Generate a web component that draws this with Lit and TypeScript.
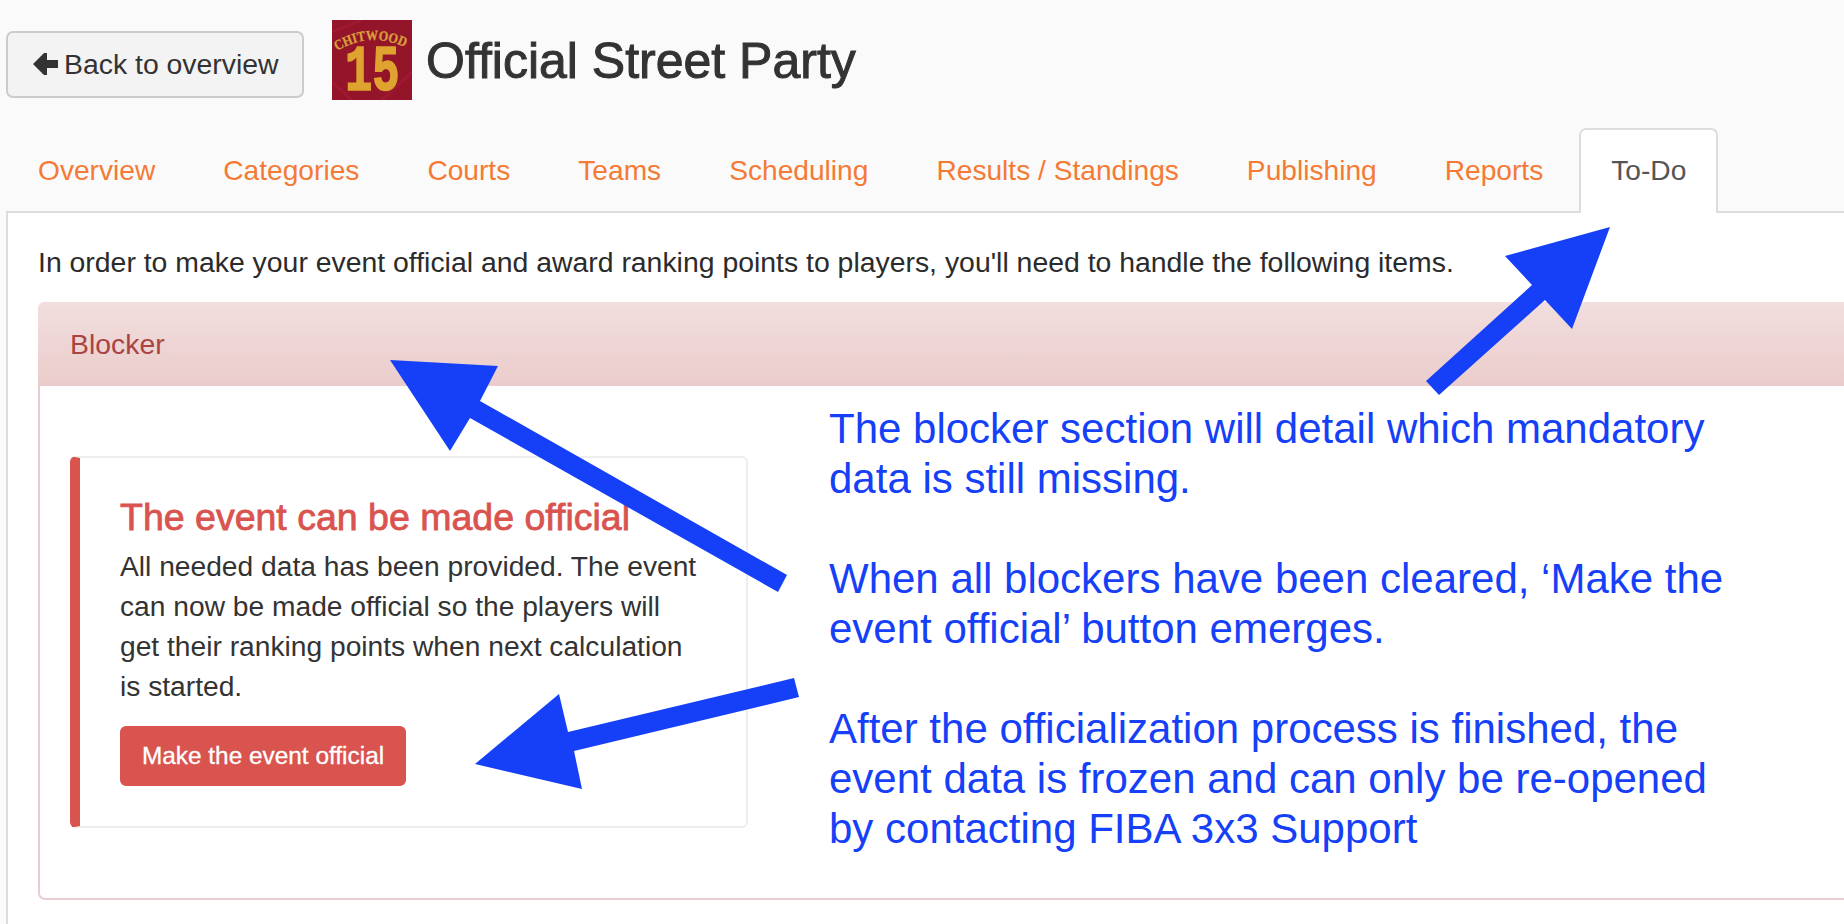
import { LitElement, css, html, svg } from "lit";
import { customElement } from "lit/decorators.js";

const TABS = [
  "Overview",
  "Categories",
  "Courts",
  "Teams",
  "Scheduling",
  "Results / Standings",
  "Publishing",
  "Reports",
  "To-Do",
];

const ARROWS = [
  "1610,227 1505,256 1532,285 1426,381 1439,395 1545,300 1572,329",
  "390,360 498,366 480,401 787,575 778,592 470,418 450,451",
  "475,764 559,694 568,732 794,678 799,697 574,751 582,789",
];

@customElement("app-root")
export class AppRoot extends LitElement {
  static styles = css`
    :host {
      display: block;
      position: relative;
      width: 1844px;
      height: 924px;
      overflow: hidden;
      background: #fafafa;
      color: #333;
      font-family: "Liberation Sans", Arial, sans-serif;
      font-size: 28.4px;
      line-height: 40px;
    }
    .header {
      display: flex;
      align-items: flex-start;
      height: 128px;
      padding: 20px 0 0 6px;
      box-sizing: border-box;
    }
    .back {
      display: flex;
      align-items: center;
      gap: 6px;
      box-sizing: border-box;
      width: 298px;
      height: 67px;
      margin: 11px 28px 0 0;
      padding: 0 0 1px 25px;
      background: #f3f3f3;
      border: 2px solid #ccc;
      border-radius: 7px;
    }
    .logo {
      display: block;
      width: 80px;
      height: 80px;
      margin-right: 14px;
    }
    h1 {
      margin: 13px 0 0;
      font-size: 50px;
      line-height: 56px;
      font-weight: 400;
      color: #333;
      -webkit-text-stroke: 1px #333;
    }
    .tabs {
      display: flex;
      margin: 0 0 -2px 6px;
      padding: 0;
      list-style: none;
      position: relative;
      font-size: 28.15px;
    }
    .tab {
      margin-right: 4px;
      padding: 21px 30px 18px;
      border: 2px solid transparent;
      border-bottom: 0;
      color: #f47a35;
      height: 42px;
    }
    .tab.active {
      background: #fff;
      color: #555;
      border-color: #ddd;
      border-radius: 7px 7px 0 0;
      padding-bottom: 20px;
    }
    .panel {
      box-sizing: border-box;
      height: 713px;
      margin-left: 6px;
      padding: 29px 0 0 30px;
      background: #fff;
      border-top: 2px solid #ddd;
      border-left: 2px solid #ddd;
    }
    .intro {
      margin: 0 0 20px;
      color: #2b2b2b;
    }
    .alert {
      box-sizing: border-box;
      height: 598px;
      margin-right: -20px;
      border: 2px solid #ebccd1;
      border-radius: 7px;
    }
    .alert-head {
      height: 40px;
      margin: -2px -2px 0;
      padding: 22px 32px;
      border-radius: 7px 7px 0 0;
      background: linear-gradient(#f2dede, #ebcccc);
      color: #a94442;
    }
    .alert-body {
      padding: 70px 0 0 30px;
    }
    .card {
      box-sizing: border-box;
      width: 678px;
      height: 372px;
      padding: 39px 47px 0 40px;
      border: 2px solid #eee;
      border-left: 10px solid #d9534f;
      border-radius: 6px;
      font-size: 28.2px;
    }
    h2 {
      margin: 0 0 9px;
      font-size: 37.5px;
      line-height: 40px;
      font-weight: 400;
      color: #d9534f;
      -webkit-text-stroke: 0.8px #d9534f;
    }
    .card p {
      margin: 0 0 20px;
    }
    .make {
      box-sizing: border-box;
      width: 286px;
      height: 60px;
      padding: 0;
      background: #d9534f;
      border: 2px solid #d9534f;
      border-radius: 6px;
      color: #fff;
      font: 24.4px / 36px "Liberation Sans", Arial, sans-serif;
      -webkit-text-stroke: 0.3px #fff;
    }
    .arrows {
      position: absolute;
      top: 0;
      left: 0;
      pointer-events: none;
    }
    .notes {
      position: absolute;
      left: 829px;
      top: 404px;
      width: 960px;
      color: #1540f8;
      font-size: 42px;
      line-height: 50px;
    }
    .notes p {
      margin: 0 0 50px;
    }
  `;

  logo() {
    return svg`<svg class="logo" viewBox="0 0 80 80">
      <defs>
        <path id="arc" d="M5 31 Q40 10 76 29"></path>
      </defs>
      <rect width="80" height="80" fill="#94142a"></rect>
      <path d="M0 12 L30 0 M50 80 L80 52 M0 62 L20 80" stroke="#a81f38" stroke-width="3" opacity=".5"></path>
      <text font-family="Liberation Serif" font-weight="700" font-size="14" fill="#d8a03a" stroke="#d8a03a" stroke-width=".3">
        <textPath href="#arc" textLength="71" lengthAdjust="spacingAndGlyphs">CHITWOOD</textPath>
      </text>
      <text transform="translate(13 70) scale(.7 1)" font-family="Liberation Mono" font-weight="700" font-size="65" fill="#dea42f" stroke="#dea42f" stroke-width="1.6">15</text>
    </svg>`;
  }

  render() {
    return html`
      <div class="header">
        <div class="back">
          <svg width="25" height="22" viewBox="0 0 25 22">
            <path d="M0 11 L11 0 L14 0 L14 7 L25 7 L25 15 L14 15 L14 22 L11 22 Z" fill="#333"></path>
          </svg>
          <span>Back to overview</span>
        </div>
        ${this.logo()}
        <h1>Official Street Party</h1>
      </div>
      <ul class="tabs">
        ${TABS.map(
          (t) => html`<li class="tab ${t === "To-Do" ? "active" : ""}">${t}</li>`
        )}
      </ul>
      <div class="panel">
        <p class="intro">
          In order to make your event official and award ranking points to
          players, you'll need to handle the following items.
        </p>
        <div class="alert">
          <div class="alert-head">Blocker</div>
          <div class="alert-body">
            <div class="card">
              <h2>The event can be made official</h2>
              <p>
                All needed data has been provided. The event can now be made
                official so the players will get their ranking points when next
                calculation is started.
              </p>
              <button class="make">Make the event official</button>
            </div>
          </div>
        </div>
      </div>
      <svg class="arrows" width="1844" height="924">
        ${ARROWS.map((p) => svg`<polygon points=${p} fill="#1540f8"></polygon>`)}
      </svg>
      <div class="notes">
        <p>The blocker section will detail which mandatory<br />data is still missing.</p>
        <p>When all blockers have been cleared, ‘Make the<br />event official’ button emerges.</p>
        <p>After the officialization process is finished, the<br />event data is frozen and can only be re-opened<br />by contacting FIBA 3x3 Support</p>
      </div>
    `;
  }
}
